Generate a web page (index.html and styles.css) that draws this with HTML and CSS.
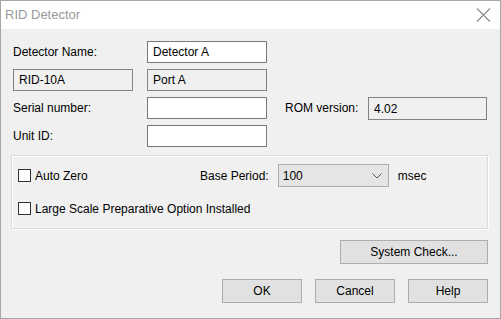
FILE: index.html
```html
<!DOCTYPE html>
<html lang="en">
<head>
  <meta charset="UTF-8" />
  <title>RID Detector</title>
  <link rel="stylesheet" href="styles.css">
</head>
<body>
  <div class="dialog">
    <!-- Title bar -->
    <div class="titlebar">
      <span class="title">RID Detector</span>
      <svg class="close" width="15" height="14" viewBox="0 0 15 14">
        <path d="M1 0.5 L14 13.5 M14 0.5 L1 13.5" stroke="#8a8a8a" stroke-width="1.1" fill="none" />
      </svg>
    </div>

    <div class="client">
      <!-- Detector fields -->
      <div class="fields">
        <div class="label">Detector Name:</div>
        <div class="edit">Detector A</div>
        <div></div>
        <div></div>

        <div class="static">RID-10A</div>
        <div class="static">Port A</div>
        <div></div>
        <div></div>

        <div class="label">Serial number:</div>
        <div class="edit"></div>
        <div class="label rom-label">ROM version:</div>
        <div class="static rom">4.02</div>

        <div class="label">Unit ID:</div>
        <div class="edit"></div>
        <div></div>
        <div></div>
      </div>

      <!-- Options group -->
      <div class="group">
        <div class="group-row">
          <label class="check first"><span class="box"></span>Auto Zero</label>
          <span class="label">Base Period:</span>
          <div class="combo">
            <span>100</span>
            <svg width="10" height="6" viewBox="0 0 10 6">
              <polyline points="0.5,0.5 5,5 9.5,0.5" stroke="#555" stroke-width="1" fill="none" />
            </svg>
          </div>
          <span class="label unit">msec</span>
        </div>
        <label class="check second"><span class="box"></span>Large Scale Preparative Option Installed</label>
      </div>

      <div class="button-row system">
        <button class="wide">System Check...</button>
      </div>

      <div class="button-row actions">
        <button>OK</button>
        <button>Cancel</button>
        <button>Help</button>
      </div>
    </div>
  </div>
</body>
</html>
```

FILE: styles.css
```css
body {
  margin: 0;
  padding: 0;
  font-family: 'Liberation Sans', Arial, sans-serif;
  font-size: 12px;
  color: #000;
  background: #f0f0f0;
}
.dialog {
  width: 501px;
  height: 319px;
  box-sizing: border-box;
  border: 1px solid #a6a6a6;
  display: flex;
  flex-direction: column;
  background: #f0f0f0;
}
.titlebar {
  height: 28px;
  background: #fff;
  display: flex;
  align-items: center;
  justify-content: space-between;
  padding: 0 9px 0 4px;
}
.title {
  font-size: 13px;
  color: #9a9a9a;
  margin-top: -1px;
}
.close {
  margin-top: -1px;
}
.client {
  flex: 1;
  padding: 12px 12px 0 12px;
}
.fields {
  display: grid;
  grid-template-columns: 120px 120px 73px 119px;
  grid-template-rows: 22px 22px 22px 22px;
  column-gap: 14px;
  row-gap: 6px;
}
.label {
  display: flex;
  align-items: center;
  white-space: nowrap;
}
.rom-label {
  padding-left: 4px;
}
.edit, .static {
  box-sizing: border-box;
  border: 1px solid #7a7a7a;
  background: #fff;
  padding: 0 5px;
  display: flex;
  align-items: center;
  height: 22px;
}
.static {
  background: #f0f0f0;
  border-color: #828282;
}
.rom {
  height: 23px;
}
.group {
  box-sizing: border-box;
  width: 477px;
  margin: 8px 0 0 -2px;
  border: 1px solid #dcdcdc;
  box-shadow: inset 1px 1px 0 #fff, 1px 1px 0 #fff;
  padding: 8px 0 11px 6px;
}
.group-row {
  display: flex;
  align-items: center;
  height: 23px;
}
.check {
  display: flex;
  align-items: center;
  white-space: nowrap;
}
.check.first {
  width: 182px;
}
.check.second {
  margin-top: 13px;
  height: 17px;
}
.box {
  width: 13px;
  height: 13px;
  box-sizing: border-box;
  border: 1px solid #333;
  background: #fff;
  margin-right: 4px;
}
.combo {
  box-sizing: border-box;
  width: 111px;
  height: 23px;
  margin-left: 9px;
  border: 1px solid #adadad;
  background: #e5e5e5;
  display: flex;
  align-items: center;
  justify-content: space-between;
  padding: 0 6px 0 4px;
}
.unit {
  margin-left: 9px;
}
.button-row {
  display: flex;
  justify-content: flex-end;
  gap: 13px;
}
.system {
  margin-top: 11px;
}
.actions {
  margin-top: 15px;
}
button {
  font-family: 'Liberation Sans', Arial, sans-serif;
  font-size: 12px;
  color: #000;
  width: 80px;
  height: 24px;
  background: #e1e1e1;
  border: 1px solid #adadad;
  padding: 0;
  margin: 0;
}
button.wide {
  width: 148px;
}
```
